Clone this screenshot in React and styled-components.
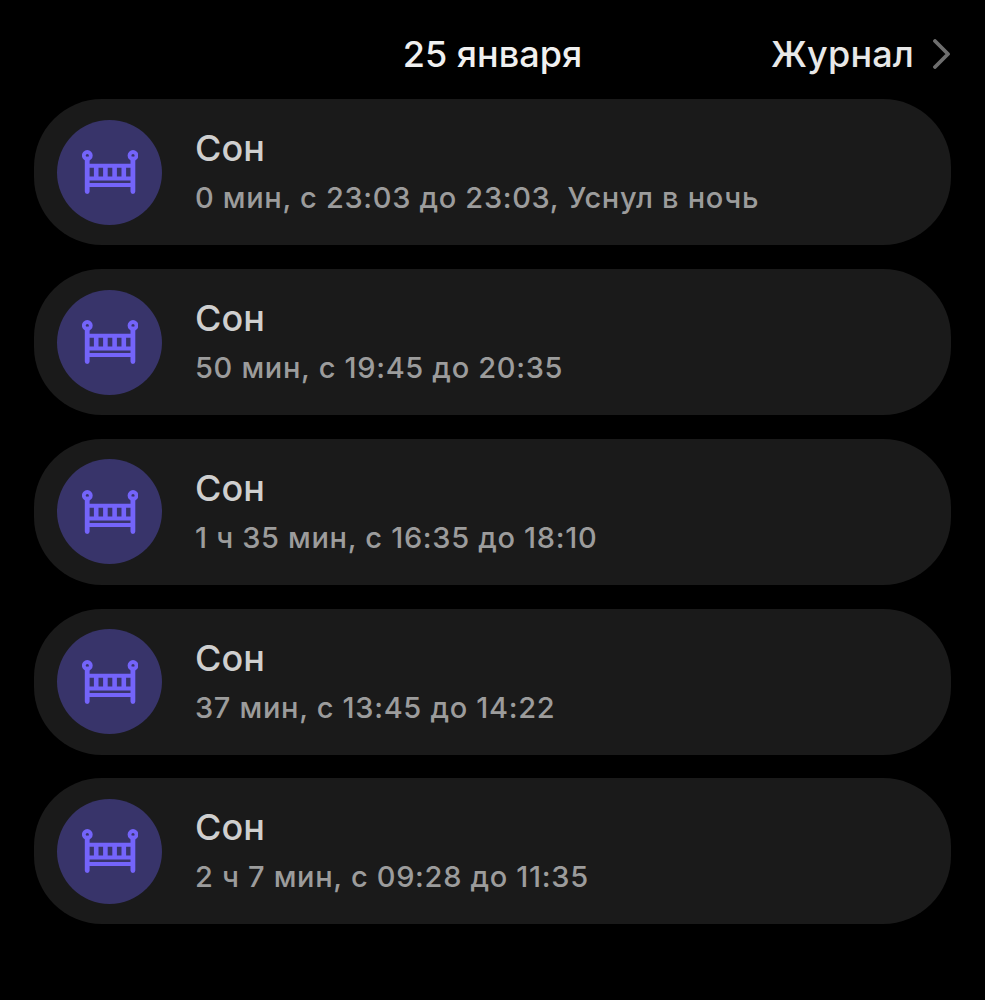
import React from "react";
import styled, { createGlobalStyle } from "styled-components";

const GlobalStyle = createGlobalStyle`
  html, body {
    margin: 0;
    background: #000;
    font-family: Inter, "Noto Sans", sans-serif;
  }
`;

const Page = styled.div`
  width: 985px;
  height: 1000px;
  box-sizing: border-box;
  padding: 32px 34px 0;
`;

const Header = styled.header`
  display: grid;
  grid-template-columns: 1fr auto 1fr;
  align-items: center;
  height: 44px;
  margin-bottom: 23.3px;
`;

const DateTitle = styled.h1`
  grid-column: 2;
  margin: 0;
  color: #f0f0f0;
  font-size: 36px;
  font-weight: 500;
`;

const JournalLink = styled.a`
  grid-column: 3;
  justify-self: end;
  display: flex;
  align-items: center;
  gap: 19px;
  color: #e8e8e8;
  font-size: 36px;
  font-weight: 500;
  letter-spacing: 0.15px;
`;

const List = styled.div`
  display: flex;
  flex-direction: column;
  gap: 23.8px;
  width: 917px;
`;

const Card = styled.div`
  display: flex;
  align-items: center;
  height: 146px;
  box-sizing: border-box;
  padding: 0 23px;
  border-radius: 68px;
  background: #1a1a1a;
`;

const IconCircle = styled.div`
  flex: none;
  display: flex;
  align-items: center;
  justify-content: center;
  width: 105px;
  height: 105px;
  border-radius: 50%;
  background: #38346a;
`;

const Info = styled.div`
  display: flex;
  flex-direction: column;
  gap: 13px;
  margin-left: 33px;
  margin-top: -1px;
`;

const Title = styled.div`
  color: #cfcfcf;
  font-size: 36px;
  font-weight: 500;
  line-height: 40px;
`;

const Details = styled.div`
  color: #9c9c9c;
  font-size: 29px;
  font-weight: 500;
  line-height: 34px;
  letter-spacing: 0.68px;
`;

const CribIcon = () => (
  <svg width="56" height="44" viewBox="0 0 56 44" fill="none">
    <g stroke="#7464fa">
      <circle cx="5.3" cy="5.5" r="3.5" strokeWidth="3.8" />
      <circle cx="51" cy="5.5" r="3.5" strokeWidth="3.8" />
      <path d="M5.2 9V41.5M50.9 9V41.5" strokeWidth="4.8" strokeLinecap="round" />
      <path d="M5 15.7H51M5 28.5H51M5 35H51" strokeWidth="4" />
      <path d="M14.2 15.7V28M23.4 15.7V28M32.6 15.7V28M41.8 15.7V28" strokeWidth="4.6" />
    </g>
  </svg>
);

const entries = [
  "0 мин, с 23:03 до 23:03, Уснул в ночь",
  "50 мин, с 19:45 до 20:35",
  "1 ч 35 мин, с 16:35 до 18:10",
  "37 мин, с 13:45 до 14:22",
  "2 ч 7 мин, с 09:28 до 11:35",
];

const App = () => (
  <Page>
    <GlobalStyle />
    <Header>
      <DateTitle>25 января</DateTitle>
      <JournalLink>
        Журнал
        <svg width="18" height="30" viewBox="0 0 18 30" fill="none">
          <path d="M2 2L15 15L2 28" stroke="#6e6e6e" strokeWidth="3.8" strokeLinecap="round" strokeLinejoin="round" />
        </svg>
      </JournalLink>
    </Header>
    <List>
      {entries.map((text) => (
        <Card key={text}>
          <IconCircle>
            <CribIcon />
          </IconCircle>
          <Info>
            <Title>Сон</Title>
            <Details>{text}</Details>
          </Info>
        </Card>
      ))}
    </List>
  </Page>
);

export default App;
